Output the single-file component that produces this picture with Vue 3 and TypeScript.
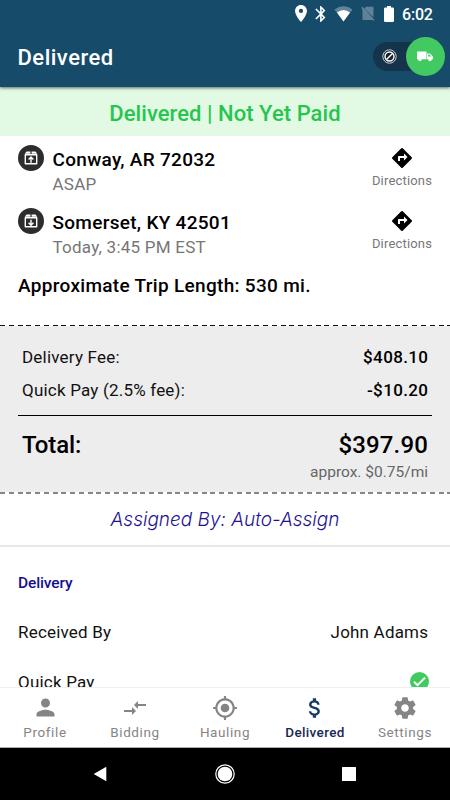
<script setup lang="ts">
interface Stop { place: string; time: string; arrow: string; cls: string }
interface Tab { label: string; cls: string; size: number; path: string; active?: boolean }

const stops: Stop[] = [
  { place: 'Conway, AR 72032', time: 'ASAP', arrow: 'M13 17.700v-5M10.600 14.500 13 12.100l2.400 2.400', cls: 'pickup' },
  { place: 'Somerset, KY 42501', time: 'Today, 3:45 PM EST', arrow: 'M13 11.800v5M10.600 14.800 13 17.200l2.400-2.400', cls: 'dropoff' },
]

const tabs: Tab[] = [
  { label: 'Profile', cls: 'profile', size: 27, path: 'M12 12c2.210 0 4-1.790 4-4s-1.790-4-4-4-4 1.790-4 4 1.790 4 4 4zm0 2c-2.670 0-8 1.340-8 4v2h16v-2c0-2.660-5.330-4-8-4z' },
  { label: 'Bidding', cls: 'bidding', size: 24, path: 'M9.010 14H1v2h8.010v3L13 15l-3.990-4v3zm5.980-1v-3H23V8h-8.010V5L11 9l3.990 4z' },
  { label: 'Hauling', cls: 'hauling', size: 26, path: 'M12 8c-2.210 0-4 1.790-4 4s1.790 4 4 4 4-1.790 4-4-1.790-4-4-4zm8.940 3c-.46-4.170-3.770-7.480-7.940-7.940V1h-2v2.060C6.830 3.520 3.520 6.830 3.060 11H1v2h2.060c.46 4.170 3.770 7.480 7.940 7.940V23h2v-2.060c4.170-.46 7.480-3.770 7.940-7.940H23v-2h-2.060zM12 19c-3.870 0-7-3.130-7-7s3.130-7 7-7 7 3.130 7 7-3.130 7-7 7z' },
  { label: 'Delivered', cls: 'delivered', size: 26, active: true, path: 'M11.800 10.900c-2.270-.59-3-1.200-3-2.150 0-1.090 1.010-1.850 2.700-1.850 1.780 0 2.440.85 2.500 2.100h2.210c-.07-1.720-1.120-3.300-3.210-3.810V3h-3v2.160c-1.940.42-3.500 1.680-3.500 3.610 0 2.310 1.910 3.460 4.700 4.130 2.500.6 3 1.480 3 2.410 0 .69-.49 1.790-2.700 1.790-2.060 0-2.870-.92-2.980-2.100h-2.200c.12 2.190 1.760 3.420 3.680 3.830V21h3v-2.150c1.950-.37 3.500-1.500 3.500-3.550 0-2.840-2.430-3.810-4.700-4.400z' },
  { label: 'Settings', cls: 'settings', size: 26, path: 'M19.430 12.980c.04-.32.07-.64.07-.98s-.03-.66-.07-.98l2.110-1.650c.19-.15.24-.42.12-.64l-2-3.460c-.12-.22-.39-.3-.61-.22l-2.490 1c-.52-.4-1.080-.73-1.690-.98l-.38-2.650C14.460 2.180 14.250 2 14 2h-4c-.25 0-.46.18-.49.42l-.38 2.650c-.61.25-1.170.59-1.690.98l-2.490-1c-.23-.09-.49 0-.61.22l-2 3.460c-.13.22-.07.49.12.64l2.110 1.650c-.04.32-.07.65-.07.98s.03.66.07.98l-2.110 1.650c-.19.15-.24.42-.12.64l2 3.460c.12.22.39.3.61.22l2.490-1c.52.4 1.080.73 1.690.98l.38 2.650c.03.24.24.42.49.42h4c.25 0 .46-.18.49-.42l.38-2.650c.61-.25 1.170-.59 1.690-.98l2.490 1c.23.09.49 0 .61-.22l2-3.460c.12-.22.07-.49-.12-.64l-2.110-1.650zM12 15.500c-1.930 0-3.500-1.570-3.500-3.500s1.570-3.500 3.500-3.500 3.500 1.570 3.500 3.500-1.570 3.500-3.500 3.500z' },
]
</script>

<template>
  <div class="screen">
    <header class="header">
      <div class="status">
        <svg class="pin" width="12" height="17" viewBox="5 2 14 20"><path d="M12 2C8.130 2 5 5.130 5 9c0 5.250 7 13 7 13s7-7.750 7-13c0-3.870-3.130-7-7-7zm0 9.500a2.500 2.500 0 0 1 0-5 2.500 2.500 0 0 1 0 5z" /></svg>
        <svg class="bt" width="11" height="16" viewBox="5 2 13 20"><path d="M17.710 7.710 12 2h-1v7.590L6.410 5 5 6.410 10.590 12 5 17.590 6.410 19 11 14.410V22h1l5.710-5.710-4.300-4.290 4.300-4.290zM13 5.830l1.880 1.880L13 9.590V5.830zm1.880 10.460L13 18.170v-3.760l1.880 1.880z" /></svg>
        <svg class="wifi" width="19" height="16" viewBox="0 0 19 16"><path opacity=".32" d="M.5 3.500Q9.500-2.800 18.500 3.500L9.500 15.500z" /><path d="M3 6.500Q9.500 1.500 16 6.500L9.500 15.500z" /></svg>
        <svg class="sim" width="14" height="16" viewBox="0 0 14 16"><path d="M5.200.8h7.300v10.600L3.400 2.600zM.5 1.500l.9-.9L13.600 14l-.9.9-.9-.9H1.500V4.200z" /></svg>
        <svg class="battery" width="10" height="16" viewBox="0 0 10 16"><path d="M3 0h4v1.600h1.700q1.300 0 1.300 1.300v11.800Q10 16 8.700 16H1.300Q0 16 0 14.700V2.900Q0 1.600 1.300 1.600H3z" /></svg>
        <span class="clock">6:02</span>
      </div>
      <div class="appbar">
        <h1>Delivered</h1>
        <div class="toggle">
          <svg class="blocked" width="15" height="15" viewBox="0 0 15 15"><circle class="outer" cx="7.500" cy="7.500" r="6.700" /><circle class="inner" cx="7.500" cy="7.500" r="4.500" /><path d="m4.500 10.500 6-6" /></svg>
          <div class="knob">
            <svg width="18" height="11" viewBox="0 0 18 11"><path d="M1 .5h9.500v7.800H1z" /><path fill-rule="evenodd" d="M11 2.500h3L17 5.400v2.900h-6zM12.200 3.600v1.900h3.200l-1.900-1.900z" /><circle cx="4" cy="8.500" r="1.700" /><circle cx="14" cy="8.500" r="1.700" /></svg>
          </div>
        </div>
      </div>
    </header>

    <main class="content">
      <div class="banner"><span>Delivered | Not Yet Paid</span></div>
      <section class="stops">
        <div v-for="stop in stops" :key="stop.place" class="stop" :class="stop.cls">
          <svg class="parcel" width="26" height="26" viewBox="0 0 26 26">
            <circle cx="13" cy="13" r="13" />
            <path class="lid" d="M8.500 6.500h3.900v2.300H6.700zM13.600 6.500h3.900l1.800 2.300h-5.700z" />
            <path class="box" d="M7.300 9.700h11.400v9H7.300z" />
            <path class="arrow" :d="stop.arrow" />
          </svg>
          <div class="where">
            <div class="place"><span>{{ stop.place }}</span></div>
            <div class="time"><span>{{ stop.time }}</span></div>
          </div>
          <div class="directions">
            <svg width="24" height="24" viewBox="0 0 24 24"><path d="m21.710 11.290-9-9a.996.996 0 0 0-1.410 0l-9 9a.996.996 0 0 0 0 1.410l9 9c.39.39 1.020.39 1.410 0l9-9a.996.996 0 0 0 0-1.410zM14 14.500V12h-4v3H8v-4c0-.55.45-1 1-1h5V7.500l3.500 3.500-3.500 3.500z" /></svg>
            <span>Directions</span>
          </div>
        </div>
        <div class="trip"><span>Approximate Trip Length: 530 mi.</span></div>
      </section>

      <section class="fees">
        <div class="dash"></div>
        <div class="fee first"><span>Delivery Fee:</span><b>$408.10</b></div>
        <div class="fee"><span>Quick Pay (2.5% fee):</span><b>-$10.20</b></div>
        <div class="rule"></div>
        <div class="total"><span class="name">Total:</span><span>$397.90</span></div>
        <div class="approx"><span>approx. $0.75/mi</span></div>
        <div class="dash soft"></div>
      </section>

      <div class="assigned"><span>Assigned By: Auto-Assign</span></div>

      <section class="delivery">
        <h2><span>Delivery</span></h2>
        <div class="row"><span>Received By</span><span>John Adams</span></div>
        <div class="row"><span>Quick Pay</span>
          <svg class="check" width="19" height="19" viewBox="0 0 18 18"><circle cx="9" cy="9" r="9" /><path d="m3.800 9.200 3.300 3.300 7.200-7.200" /></svg>
        </div>
      </section>
    </main>

    <nav class="tabs">
      <div v-for="tab in tabs" :key="tab.label" class="tab" :class="[tab.cls, { active: tab.active }]">
        <div class="icon"><svg :width="tab.size" :height="tab.size" viewBox="0 0 24 24"><path :d="tab.path" /></svg></div>
        <span>{{ tab.label }}</span>
      </div>
    </nav>

    <footer class="system">
      <svg width="14" height="16" viewBox="0 0 14 16"><path d="M13.300.8v14.400L.7 8z" /></svg>
      <svg width="20" height="20" viewBox="0 0 20 20"><circle class="ring" cx="10" cy="10" r="9.200" /><circle cx="10" cy="10" r="7.300" /></svg>
      <svg class="square" width="14" height="14" viewBox="0 0 14 14"><rect width="14" height="14" rx=".5" /></svg>
    </footer>
  </div>
</template>

<style>
body { background: #fff; overflow: hidden; }
</style>

<style scoped>
* { box-sizing: border-box; }
.screen { width: 450px; height: 800px; display: flex; flex-direction: column; font-family: Roboto, sans-serif; color: #0b0b0b; background: #fff; white-space: nowrap; overflow: hidden; }
svg { display: block; flex: none; }

.header { height: 87px; flex: none; background: #174b6a; color: #fff; box-shadow: 0 1px 3px rgba(20, 20, 30, .65); position: relative; z-index: 1; }
.status { height: 27px; display: flex; align-items: center; justify-content: flex-end; padding: 0 17px 0 0; fill: #fff; }
.bt { margin-left: 8px; }
.wifi { margin-left: 8px; }
.sim { margin-left: 8px; fill: #5f8298; }
.battery { margin-left: 9px; }
.clock { margin-left: 8px; font-size: 16px; font-weight: 500; width: 31px; line-height: 27px; letter-spacing: -.2px; padding-top: 1px; }
.appbar { height: 60px; display: flex; align-items: center; justify-content: space-between; padding: 0 5.500px 0 17.500px; }
h1 { margin: 2px 0 0; font-size: 22px; font-weight: 500; line-height: 30px; letter-spacing: .5px; }
.toggle { width: 71.500px; height: 29px; border-radius: 15px; background: #15334a; display: flex; align-items: center; justify-content: space-between; padding-left: 9px; margin-top: -1px; }
.blocked { fill: none; stroke: #fff; }
.blocked .outer { fill: #10202f; stroke-width: .8; }
.blocked .inner { stroke-width: 1.400; }
.blocked path { stroke-width: 1.500; }
.knob { width: 39px; height: 39px; border-radius: 50%; background: #43c961; display: flex; align-items: center; justify-content: center; fill: #fff; flex: none; }

.content { height: 600px; flex: none; overflow: hidden; display: flex; flex-direction: column; }
.banner { height: 49px; flex: none; background: #e2fae4; color: #27c550; text-align: center; font-size: 22px; font-weight: 500; line-height: 53px; letter-spacing: .05px; }
.stops { height: 189px; flex: none; padding: 9px 18px 0; }
.stop { height: 63px; display: flex; align-items: flex-start; }
.parcel { fill: #2d2d2f; }
.parcel .lid { fill: #fff; }
.parcel .box, .parcel .arrow { fill: none; stroke: #fff; stroke-width: 1.400; stroke-linejoin: round; }
.where { flex: 1; padding: 1px 0 0 8.500px; }
.place { font-size: 19px; font-weight: 500; line-height: 27px; letter-spacing: .29px; color: #000; }
.time { font-size: 17px; line-height: 22px; letter-spacing: .24px; color: #767676; }
.directions { width: 60px; display: flex; flex-direction: column; align-items: center; font-size: 13px; color: #777; }
.directions svg { margin-top: 1px; fill: #000; }
.directions span { line-height: 20px; margin-top: 1px; letter-spacing: .18px; }
.trip { padding-top: 1px; font-size: 19px; font-weight: 500; line-height: 28px; letter-spacing: .31px; color: #000; }

.fees { height: 169px; flex: none; background: #ededed; display: flex; flex-direction: column; }
.dash { height: 1px; flex: none; background: repeating-linear-gradient(90deg, #111 0 5px, #fff 5px 8.770px); }
.dash.soft { height: 2px; margin-top: auto; background: repeating-linear-gradient(90deg, #858585 0 5px, #fff 5px 8.770px); }
.fee { height: 32.500px; padding: 0 21.700px 0 22px; display: flex; justify-content: space-between; font-size: 17px; line-height: 32px; letter-spacing: .2px; color: #111; }
.fee.first { margin-top: 15px; }
.fee b { font-weight: 500; letter-spacing: .36px; color: #000; }
.rule { height: 1px; background: #000; margin: 9px 18px 0; flex: none; }
.total { height: 34px; margin-top: 12px; padding: 0 22px; display: flex; justify-content: space-between; font-size: 24px; font-weight: 500; line-height: 34px; letter-spacing: .15px; color: #000; }
.total .name { letter-spacing: -.15px; }
.approx { padding: 0 22px; text-align: right; font-size: 15.500px; line-height: 20px; color: #666; }

.assigned { height: 53px; flex: none; border-bottom: 2px solid #e8e8e8; text-align: center; font-family: Inter, sans-serif; font-size: 19px; font-style: italic; font-weight: 300; line-height: 51px; color: #1c1393; }
.delivery { padding: 0 21.800px 0 18px; }
h2 { margin: 24px 0 0; font-size: 15.500px; line-height: 24px; font-weight: 500; letter-spacing: -.13px; color: #120e91; }
.row { height: 50px; display: flex; align-items: center; justify-content: space-between; font-size: 17px; line-height: 24px; letter-spacing: .2px; color: #111; }
h2 + .row { margin-top: 12px; }
.check { fill: #43c961; margin-right: -1px; margin-top: -1px; }
.check path { fill: none; stroke: #fff; stroke-width: 1.900; }

.tabs { height: 61px; flex: none; display: grid; grid-template-columns: repeat(5, 1fr); background: #fff; border-top: 1px solid #f0f0f0; border-bottom: 1px solid #aaa; }
.tab { display: flex; flex-direction: column; align-items: center; fill: #858585; color: #858585; font-size: 13.500px; }
.icon { height: 27px; margin-top: 6px; display: flex; align-items: center; }
.tab span { line-height: 20px; margin-top: 1px; letter-spacing: .6px; }
.tab.active { fill: #183d63; color: #172852; }
.tab.active span { font-weight: 500; letter-spacing: .35px; }

.system { flex: 1; background: #000; display: grid; grid-template-columns: 124px 126px 124px; padding-left: 38px; align-items: center; justify-items: center; fill: #fff; }
.system .ring { fill: none; stroke: #fff; stroke-width: 1.200; }
.system .square { margin-right: 2px; }
</style>
